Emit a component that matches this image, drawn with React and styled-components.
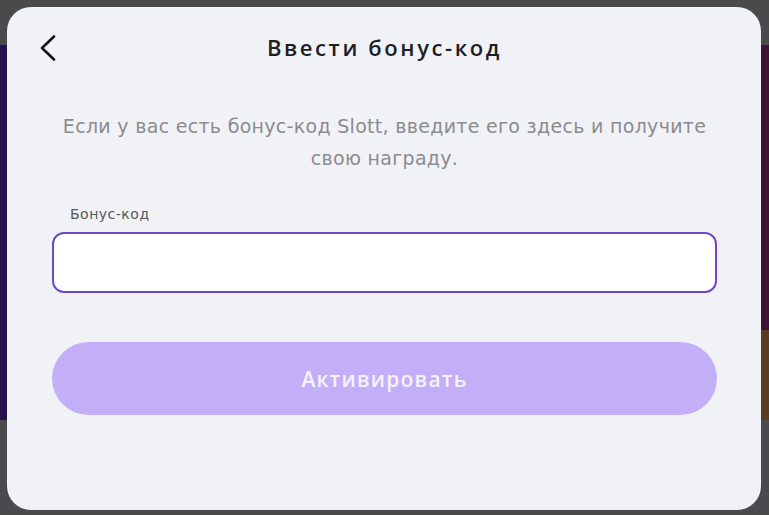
import React from "react";
import styled, { createGlobalStyle } from "styled-components";

const Global = createGlobalStyle`
  html, body { margin: 0; padding: 0; background: #4a4a4c; }
  * { box-sizing: border-box; }
`;

const Backdrop = styled.div`
  width: 769px;
  height: 515px;
  padding: 7px 8px 5px 7px;
  background:
    linear-gradient(to right, #24134d 0 10px, transparent 10px calc(100% - 10px), #3a1436 calc(100% - 10px)) 0 45px / 100% 285px no-repeat,
    linear-gradient(to right, #24134d 0 10px, transparent 10px calc(100% - 10px), #5a3c22 calc(100% - 10px)) 0 330px / 100% 90px no-repeat,
    #4a4a4c;
  font-family: "DejaVu Sans", "Open Sans", sans-serif;
`;

const Modal = styled.div`
  width: 100%;
  height: 100%;
  background: #f1f2f6;
  border-radius: 24px;
  padding: 22px 44px 0 45px;
  display: flex;
  flex-direction: column;
`;

const Header = styled.div`
  position: relative;
  height: 36px;
  display: flex;
  align-items: center;
  justify-content: center;
`;

const BackButton = styled.button`
  position: absolute;
  left: -16px;
  top: 5px;
  width: 24px;
  height: 28px;
  padding: 0;
  border: 0;
  background: none;
  display: flex;
  align-items: center;
  justify-content: center;
  color: #141418;
`;

const Title = styled.h1`
  margin: 0;
  font-family: "Open Sans", "DejaVu Sans", sans-serif;
  font-size: 22px;
  font-weight: 600;
  letter-spacing: 2.6px;
  color: #1e1e24;
`;

const Description = styled.p`
  margin: 45px 0 0;
  text-align: center;
  font-size: 19px;
  line-height: 32px;
  letter-spacing: 0.3px;
  color: #8b8b90;
`;

const Label = styled.label`
  margin: 32px 0 0 18px;
  font-size: 14px;
  line-height: 16px;
  letter-spacing: 0.5px;
  color: #55555b;
`;

const Input = styled.input`
  margin-top: 10px;
  height: 61px;
  width: 100%;
  border: 2px solid #7048c8;
  border-radius: 12px;
  background: #ffffff;
  outline: none;
  padding: 0 18px;
  font: inherit;
  font-size: 16px;
`;

const SubmitButton = styled.button`
  margin-top: 49px;
  height: 73px;
  width: 100%;
  border: 0;
  border-radius: 37px;
  background: #c3aff7;
  color: #f6f2fd;
  font-family: "Open Sans", "DejaVu Sans", sans-serif;
  font-size: 21px;
  font-weight: 600;
  letter-spacing: 1.2px;
`;

export default function App() {
  return (
    <>
      <Global />
      <Backdrop>
        <Modal>
          <Header>
            <BackButton aria-label="Назад">
              <svg width="18" height="26" viewBox="0 0 18 26" fill="none">
                <path d="M15 1.5 L3 13 L15 24.5" stroke="currentColor" strokeWidth="2.6" strokeLinecap="round" strokeLinejoin="round" />
              </svg>
            </BackButton>
            <Title>Ввести бонус-код</Title>
          </Header>
          <Description>
            Если у вас есть бонус-код Slott, введите его здесь и получите
            <br />
            свою награду.
          </Description>
          <Label htmlFor="bonus">Бонус-код</Label>
          <Input id="bonus" />
          <SubmitButton disabled>Активировать</SubmitButton>
        </Modal>
      </Backdrop>
    </>
  );
}
